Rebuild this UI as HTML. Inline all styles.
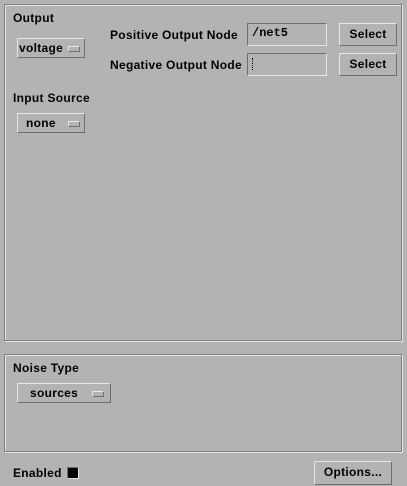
<!DOCTYPE html>
<html><head><style>
body{margin:0;width:407px;height:486px;background:#b3b3b3;font-family:"Liberation Sans",sans-serif;font-weight:bold;font-size:12px;letter-spacing:0.3px;color:#000;position:relative;overflow:hidden}
.a{position:absolute}
.frame{position:absolute;border:1px solid #7f7f7f;box-shadow:inset 1px 1px 0 #e6e6e6,1px 1px 0 #e6e6e6}
.btn{position:absolute;box-sizing:border-box;border:1px solid;border-color:#e6e6e6 #6e6e6e #6e6e6e #e6e6e6;background:#b3b3b3;line-height:18px}
.ind{position:absolute;width:10px;height:4px;border:1px solid;border-color:#e6e6e6 #6e6e6e #6e6e6e #e6e6e6;top:7px}
.tf{position:absolute;box-sizing:border-box;border:1px solid;border-color:#6e6e6e #e6e6e6 #e6e6e6 #6e6e6e;background:#b3b3b3;font-family:"Liberation Mono",monospace;font-size:12px;letter-spacing:0;padding-left:4px;line-height:19px}
</style></head><body>
<div class="frame" style="left:4px;top:4px;width:396px;height:335px"></div>
<div class="frame" style="left:4px;top:354px;width:396px;height:96px"></div>
<div class="a" style="left:13px;top:11px">Output</div>
<div class="btn" style="left:17px;top:38px;width:68px;height:20px"><span style="position:absolute;left:1px;top:0">voltage</span><div class="ind" style="left:50px"></div></div>
<div class="a" style="left:110px;top:28px">Positive Output Node</div>
<div class="a" style="left:110px;top:58px">Negative Output Node</div>
<div class="tf" style="left:247px;top:23px;width:80px;height:23px">/net5</div>
<div class="tf" style="left:247px;top:53px;width:80px;height:23px"><span style="display:inline-block;width:1px;height:12px;border-left:1px dotted #000;margin-top:4px"></span></div>
<div class="btn" style="left:339px;top:23px;width:58px;height:23px;text-align:center;line-height:21px">Select</div>
<div class="btn" style="left:339px;top:53px;width:58px;height:23px;text-align:center;line-height:21px">Select</div>
<div class="a" style="left:13px;top:91px">Input Source</div>
<div class="btn" style="left:17px;top:113px;width:68px;height:20px"><span style="position:absolute;left:8px;top:0">none</span><div class="ind" style="left:50px"></div></div>
<div class="a" style="left:13px;top:361px">Noise Type</div>
<div class="btn" style="left:17px;top:383px;width:94px;height:20px"><span style="position:absolute;left:12px;top:0">sources</span><div class="ind" style="left:74px"></div></div>
<div class="a" style="left:13px;top:466px">Enabled</div>
<div class="a" style="left:67px;top:467px;width:10px;height:10px;background:#000;border:1px solid;border-color:#6e6e6e #e6e6e6 #e6e6e6 #6e6e6e"></div>
<div class="btn" style="left:314px;top:461px;width:78px;height:24px;text-align:center;line-height:21px">Options...</div>
</body></html>
